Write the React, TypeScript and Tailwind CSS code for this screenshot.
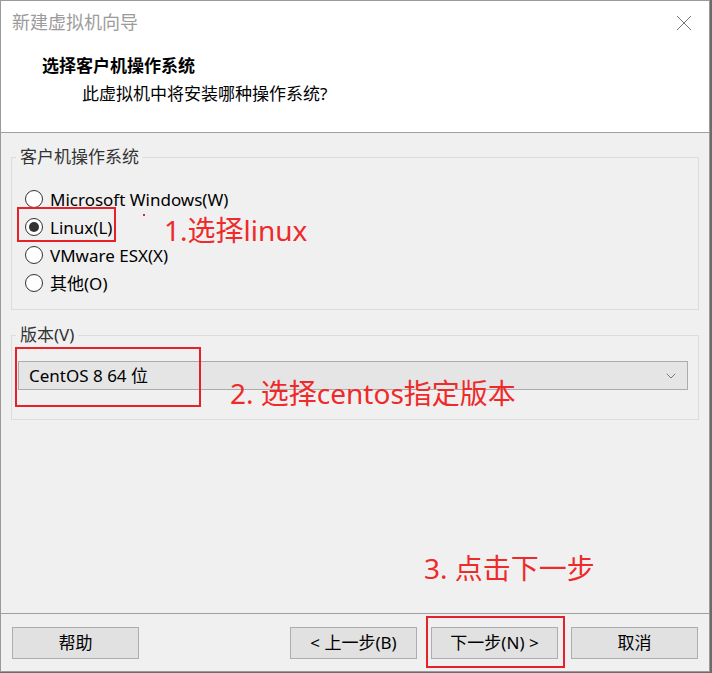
import { ChevronDown } from 'lucide-react';

const ui = { fontFamily: '"Noto Sans", "Noto Sans CJK SC", sans-serif' };
const cjk = { fontFamily: '"Noto Sans CJK SC", "Noto Sans", sans-serif' };

function Radio({ label, checked }: { label: string; checked?: boolean }) {
  return (
    <div className="flex h-[28px] items-center">
      <span className="ml-[13px] flex h-[18px] w-[18px] items-center justify-center rounded-full border border-[#333] bg-white">
        {checked && <span className="h-[10px] w-[10px] rounded-full bg-[#333]" />}
      </span>
      <span className="ml-[7px] text-[17px] leading-none text-black">{label}</span>
    </div>
  );
}

function Btn({ children }: { children: React.ReactNode }) {
  return (
    <button className="flex h-[32px] w-[127px] items-center justify-center border border-[#adadad] bg-[#e1e1e1] text-[17px] text-black">
      {children}
    </button>
  );
}

export default function App() {
  return (
    <div className="relative h-[673px] w-[712px] overflow-hidden bg-[#6b6b6b]" style={ui}>
      <div className="flex h-[672px] w-[710px] flex-col border border-[#9a9a9a] bg-[#f0f0f0]">
        {/* header */}
        <div className="h-[132px] border-b border-[#a0a0a0] bg-white">
          <div className="flex h-[43px] items-center justify-between pl-[11px] pr-[17px]">
            <span className="text-[18px] text-[#9b9b9b]">新建虚拟机向导</span>
            <svg width="16" height="16" viewBox="0 0 16 16" className="text-[#777]">
              <path d="M1 1L15 15M15 1L1 15" stroke="currentColor" strokeWidth="1" />
            </svg>
          </div>
          <div className="pl-[41px] pt-[12px] text-[17px] font-bold leading-none text-black" style={cjk}>选择客户机操作系统</div>
          <div className="pl-[81px] pt-[12px] text-[17px] leading-none text-black">此虚拟机中将安装哪种操作系统?</div>
        </div>

        {/* guest os group */}
        <fieldset className="mx-[10px] mt-[12px] border border-[#dcdcdc] pb-[12px]">
          <legend className="ml-[4px] px-[4px] text-[17px] leading-[24px] text-[#333]">客户机操作系统</legend>
          <div className="pt-[16px]">
            <Radio label="Microsoft Windows(W)" />
            <Radio label="Linux(L)" checked />
            <Radio label="VMware ESX(X)" />
            <Radio label="其他(O)" />
          </div>
        </fieldset>

        {/* version group */}
        <fieldset className="mx-[10px] mt-[13px] border border-[#dcdcdc] pb-[29px] pl-[6px] pr-[10px]">
          <legend className="ml-[-2px] px-[4px] text-[17px] leading-[24px] text-[#333]">版本(V)</legend>
          <div className="mt-[14px] flex h-[29px] items-center justify-between border border-[#acacac] bg-[#e5e5e5] pl-[10px] pr-[8px]">
            <span className="text-[17px] text-black">CentOS 8 64 位</span>
            <ChevronDown size={16} strokeWidth={1} className="text-[#444]" />
          </div>
        </fieldset>

        <div className="flex-1" />

        {/* footer */}
        <div className="h-[58px] border-t border-[#a0a0a0] pt-[13px]">
          <div className="flex px-[11px]">
            <Btn>帮助</Btn>
            <div className="flex-1" />
            <Btn>&lt; 上一步(B)</Btn>
            <div className="w-[14px]" />
            <Btn>下一步(N) &gt;</Btn>
            <div className="w-[13px]" />
            <Btn>取消</Btn>
          </div>
        </div>
      </div>

      {/* annotations */}
      <div className="absolute left-[17px] top-[207px] h-[35px] w-[99px] border-2 border-[#e8202a]" />
      <div className="absolute left-[143px] top-[214px] h-[2px] w-[2px] bg-[#e8202a]" />
      <div className="absolute left-[164px] top-[212px] text-[28px] leading-[36px] text-[#ee2a2a]">1.选择linux</div>
      <div className="absolute left-[15px] top-[347px] h-[60px] w-[186px] border-2 border-[#e8202a]" />
      <div className="absolute left-[230px] top-[375px] text-[28px] leading-[36px] text-[#ee2a2a]">2. 选择centos指定版本</div>
      <div className="absolute left-[424px] top-[550px] text-[28px] leading-[36px] text-[#ee2a2a]">3. 点击下一步</div>
      <div className="absolute left-[426px] top-[616px] h-[52px] w-[139px] border-2 border-[#e8202a]" />
    </div>
  );
}
